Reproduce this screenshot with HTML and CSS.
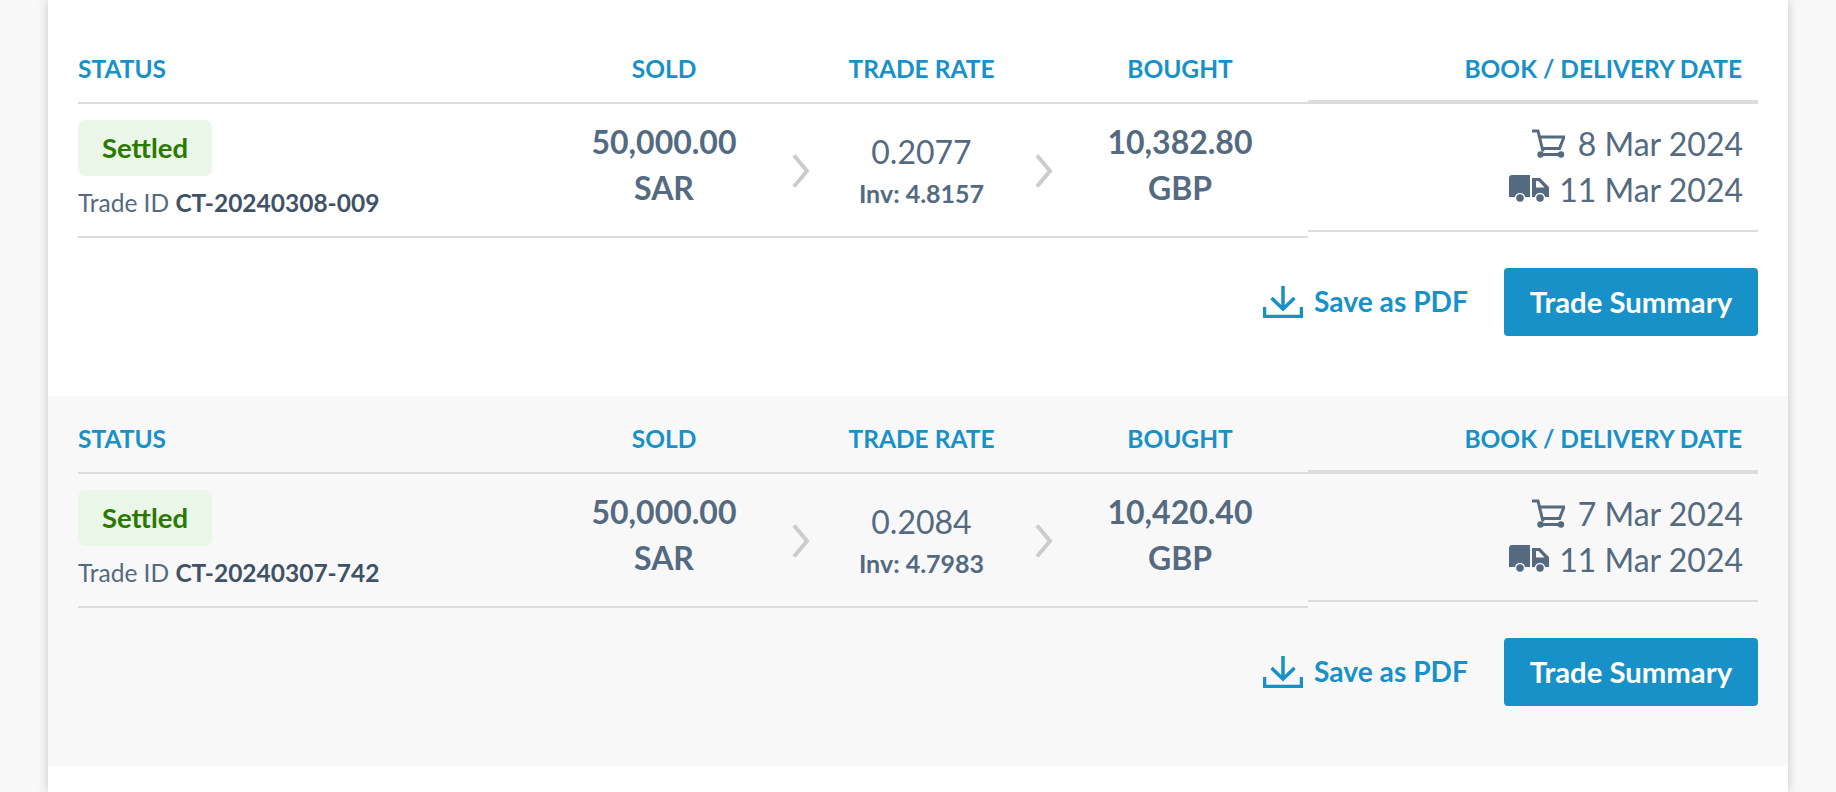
FILE: index.html
```html
<!DOCTYPE html>
<html lang="en">
<head>
    <meta charset="UTF-8">
    <title>Trade History</title>
    <link rel="stylesheet" href="styles.css">
</head>
<body>
    <main class="card">
        <section class="trade">
            <div class="trade-row">
                <div class="trade-main">
                    <div class="main-grid main-head">
                        <div class="head-label">STATUS</div>
                        <div class="head-label center">SOLD</div>
                        <div></div>
                        <div class="head-label center">TRADE RATE</div>
                        <div></div>
                        <div class="head-label center">BOUGHT</div>
                    </div>
                    <div class="main-grid main-body">
                        <div class="status-cell">
                            <span class="badge">Settled</span>
                            <div class="trade-id">Trade ID <b>CT-20240308-009</b></div>
                        </div>
                        <div class="amount">50,000.00<br>SAR</div>
                        <svg class="chevron" viewBox="0 0 18 34"><path d="M2 1.500l13 15.500L2 32.500"/></svg>
                        <div class="rate">
                            <div class="rate-value">0.2077</div>
                            <div class="rate-inv">Inv: 4.8157</div>
                        </div>
                        <svg class="chevron" viewBox="0 0 18 34"><path d="M2 1.500l13 15.500L2 32.500"/></svg>
                        <div class="amount">10,382.80<br>GBP</div>
                    </div>
                </div>
                <div class="trade-dates">
                    <div class="head-label right dates-head">BOOK / DELIVERY DATE</div>
                    <div class="dates-body">
                        <div class="date-line">
                            <svg class="icon-cart" viewBox="0 0 34 29"><path class="line" d="M1 2h6l5 20.500M8.500 8H33l-4.500 11.500H11M9.500 25.500H30"/><circle cx="9.500" cy="25.500" r="3.200"/><circle cx="30" cy="25.500" r="3.200"/></svg>
                            8 Mar 2024
                        </div>
                        <div class="date-line">
                            <svg class="icon-truck" viewBox="0 0 40 28"><path d="M3 0h18v22H0V3a3 3 0 0 1 3-3z"/><path fill-rule="evenodd" d="M23 3h8l9 9v10H23zM27 6v6.500h8.500L29.500 6z"/><circle class="wheel" cx="11" cy="23" r="4.500"/><circle class="wheel" cx="31" cy="23" r="4.500"/></svg>
                            11 Mar 2024
                        </div>
                    </div>
                </div>
            </div>
            <div class="trade-actions">
                <a class="pdf-link">
                    <svg class="icon-save" viewBox="0 0 40 32"><path d="M20 0v22M8.500 12L20 23l11.500-11M1.500 21v9.500h37V21"/></svg>
                    <span class="pdf-text">Save as PDF</span>
                </a>
                <button class="summary-btn">Trade Summary</button>
            </div>
        </section>

        <section class="trade alt">
            <div class="trade-row">
                <div class="trade-main">
                    <div class="main-grid main-head">
                        <div class="head-label">STATUS</div>
                        <div class="head-label center">SOLD</div>
                        <div></div>
                        <div class="head-label center">TRADE RATE</div>
                        <div></div>
                        <div class="head-label center">BOUGHT</div>
                    </div>
                    <div class="main-grid main-body">
                        <div class="status-cell">
                            <span class="badge">Settled</span>
                            <div class="trade-id">Trade ID <b>CT-20240307-742</b></div>
                        </div>
                        <div class="amount">50,000.00<br>SAR</div>
                        <svg class="chevron" viewBox="0 0 18 34"><path d="M2 1.500l13 15.500L2 32.500"/></svg>
                        <div class="rate">
                            <div class="rate-value">0.2084</div>
                            <div class="rate-inv">Inv: 4.7983</div>
                        </div>
                        <svg class="chevron" viewBox="0 0 18 34"><path d="M2 1.500l13 15.500L2 32.500"/></svg>
                        <div class="amount">10,420.40<br>GBP</div>
                    </div>
                </div>
                <div class="trade-dates">
                    <div class="head-label right dates-head">BOOK / DELIVERY DATE</div>
                    <div class="dates-body">
                        <div class="date-line">
                            <svg class="icon-cart" viewBox="0 0 34 29"><path class="line" d="M1 2h6l5 20.500M8.500 8H33l-4.500 11.500H11M9.500 25.500H30"/><circle cx="9.500" cy="25.500" r="3.200"/><circle cx="30" cy="25.500" r="3.200"/></svg>
                            7 Mar 2024
                        </div>
                        <div class="date-line">
                            <svg class="icon-truck" viewBox="0 0 40 28"><path d="M3 0h18v22H0V3a3 3 0 0 1 3-3z"/><path fill-rule="evenodd" d="M23 3h8l9 9v10H23zM27 6v6.500h8.500L29.500 6z"/><circle class="wheel" cx="11" cy="23" r="4.500"/><circle class="wheel" cx="31" cy="23" r="4.500"/></svg>
                            11 Mar 2024
                        </div>
                    </div>
                </div>
            </div>
            <div class="trade-actions">
                <a class="pdf-link">
                    <svg class="icon-save" viewBox="0 0 40 32"><path d="M20 0v22M8.500 12L20 23l11.500-11M1.500 21v9.500h37V21"/></svg>
                    <span class="pdf-text">Save as PDF</span>
                </a>
                <button class="summary-btn">Trade Summary</button>
            </div>
        </section>
    </main>
</body>
</html>
```

FILE: styles.css
```css
html, body {
    height: 100%;
}

body {
    margin: 0;
    overflow: hidden;
    background-color: #f8f8f8;
    font-family: "Lato", sans-serif;
    color: #546a80;
}

.card {
    height: 100%;
    margin: 0 48px;
    padding-top: 26px;
    box-sizing: border-box;
    background: #ffffff;
    box-shadow: 0 0 10px rgba(0, 0, 0, 0.2);
}

.trade {
    height: 370px;
    padding: 0 30px;
    box-sizing: border-box;
}

.trade.alt {
    background: #f8f8f8;
}

.trade-row {
    display: flex;
}

.trade-main {
    width: 1230px;
}

.trade-dates {
    flex: 1;
}

.main-grid {
    display: grid;
    grid-template-columns: 500px 172px 102px 139px 105px 168px;
}

.main-head {
    height: 78px;
    box-sizing: border-box;
    align-items: center;
    padding-top: 11px;
    padding-bottom: 2px;
    border-bottom: 2px solid #dcdcdc;
}

.head-label {
    font-size: 24.5px;
    font-weight: 700;
    color: #1791c8;
    white-space: nowrap;
}

.center {
    justify-self: center;
    text-align: center;
}

.right {
    text-align: right;
}

.dates-head {
    height: 78px;
    box-sizing: border-box;
    padding: 28px 16px 0 0;
    border-bottom: 4px solid #dcdcdc;
}

.main-body {
    height: 134px;
    box-sizing: border-box;
    border-bottom: 2px solid #dcdcdc;
}

.status-cell {
    padding-top: 16px;
}

.badge {
    display: inline-block;
    padding: 0 24px;
    height: 56px;
    line-height: 56px;
    border-radius: 8px;
    background: #eaf6e8;
    color: #2a7a00;
    font-size: 27.5px;
    font-weight: 700;
}

.trade-id {
    margin-top: 13px;
    font-size: 24.5px;
    line-height: 28px;
}

.trade-id b {
    color: #3f5266;
}

.amount {
    padding-top: 15px;
    text-align: center;
    font-size: 32px;
    font-weight: 700;
    line-height: 46px;
}

.chevron {
    justify-self: center;
    align-self: center;
    width: 18px;
    height: 34px;
    margin-top: 2px;
    fill: none;
    stroke: #cccccc;
    stroke-width: 4;
}

.rate {
    padding-top: 28px;
    text-align: center;
}

.rate-value {
    font-size: 32px;
    line-height: 40px;
}

.rate-inv {
    margin-top: 6px;
    font-size: 25px;
    font-weight: 700;
    line-height: 30px;
}

.dates-body {
    height: 128px;
    box-sizing: border-box;
    padding: 16px 15px 0 0;
    border-bottom: 2px solid #dcdcdc;
}

.date-line {
    display: flex;
    justify-content: flex-end;
    align-items: center;
    gap: 10px;
    height: 46px;
    font-size: 32px;
}

.icon-cart {
    width: 34px;
    height: 29px;
    margin-right: 3px;
    fill: #546a80;
}

.icon-cart .line {
    fill: none;
    stroke: #546a80;
    stroke-width: 3;
}

.icon-truck {
    width: 40px;
    height: 28px;
    fill: #546a80;
}

.icon-truck .wheel {
    stroke: #ffffff;
    stroke-width: 1.500;
}

.alt .icon-truck .wheel {
    stroke: #f8f8f8;
}

.trade-actions {
    display: flex;
    justify-content: flex-end;
    align-items: center;
    gap: 36px;
    margin-top: 30px;
}

.pdf-link {
    display: flex;
    align-items: center;
    gap: 11px;
    font-size: 28.2px;
    font-weight: 700;
    color: #1791c8;
}

.pdf-text {
    margin-bottom: 2px;
}

.icon-save {
    width: 40px;
    height: 32px;
    fill: none;
    stroke: #1791c8;
    stroke-width: 3.5;
}

.summary-btn {
    width: 254px;
    height: 68px;
    padding: 0 0 2px;
    border: none;
    border-radius: 4px;
    background-color: #1791c8;
    color: #ffffff;
    font-family: inherit;
    font-size: 29.3px;
    font-weight: 700;
}
```
